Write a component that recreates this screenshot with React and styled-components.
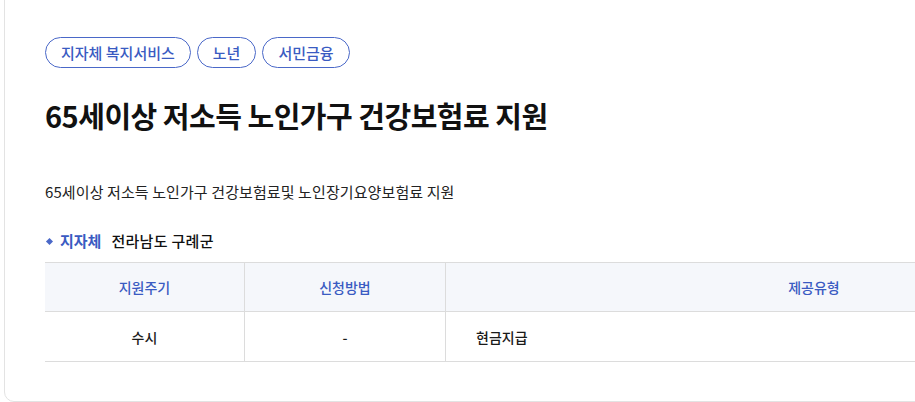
import React from 'react';
import styled, { createGlobalStyle } from 'styled-components';

const GlobalStyle = createGlobalStyle`
	html, body {
		margin: 0;
		padding: 0;
		background: #fff;
		overflow: hidden;
	}
	body {
		font-family: 'Noto Sans CJK KR', 'Noto Sans', sans-serif;
		color: #111;
	}
`;

const Page = styled.div`
	width: 915px;
	height: 402px;
	padding-left: 4px;
	box-sizing: border-box;
	overflow: hidden;
`;

const Card = styled.section`
	width: 1240px;
	margin-top: -12px;
	padding: 48px 0 39px 40px;
	border: 1px solid #e3e3e3;
	border-radius: 10px;
	box-sizing: border-box;
	background: #fff;
`;

const Tags = styled.ul`
	display: flex;
	gap: 6px;
	margin: 0;
	padding: 0;
	list-style: none;
`;

const Tag = styled.li`
	display: flex;
	align-items: center;
	height: 31px;
	padding: 0 15px;
	border: 1px solid #4a68c8;
	border-radius: 16px;
	box-sizing: border-box;
	font-size: 15px;
	font-weight: 500;
	color: #3a5bc2;
`;

const Title = styled.h2`
	margin: 29px 0 0;
	font-size: 29px;
	line-height: 36px;
	font-weight: 700;
	letter-spacing: -0.5px;
	color: #111;
`;

const Desc = styled.p`
	margin: 48px 0 0;
	font-size: 15px;
	line-height: 22px;
	letter-spacing: 0.1px;
	color: #222;
`;

const Info = styled.div`
	display: flex;
	align-items: center;
	gap: 10px;
	margin-top: 27px;
	font-size: 15px;
	line-height: 22px;
	letter-spacing: 0.3px;
`;

const InfoLabel = styled.span`
	display: flex;
	align-items: center;
	gap: 8px;
	font-weight: 700;
	letter-spacing: 0;
	color: #3a5bc2;
	&::before {
		content: '';
		width: 5px;
		height: 5px;
		margin-left: 2px;
		background: #4a68c8;
		transform: rotate(45deg);
	}
`;

const InfoValue = styled.span`
	font-weight: 500;
	color: #111;
`;

const Table = styled.table`
	margin-top: 10px;
	border-collapse: collapse;
	table-layout: fixed;
	width: 1135px;
	border-top: 1px solid #dcdcdc;
`;

const Th = styled.th`
	width: ${props => props.w}px;
	height: 48px;
	padding: 0;
	background: #f5f7fb;
	border-bottom: 1px solid #dcdcdc;
	border-left: ${props => (props.first ? 'none' : '1px solid #dcdcdc')};
	font-size: 14px;
	font-weight: 500;
	color: #3a5bc2;
	text-align: center;
`;

const Td = styled.td`
	height: 49px;
	padding: ${props => (props.left ? '0 0 0 30px' : '0')};
	border-bottom: 1px solid #dcdcdc;
	border-left: ${props => (props.first ? 'none' : '1px solid #dcdcdc')};
	font-size: 14px;
	font-weight: 500;
	color: #1a1a1a;
	text-align: ${props => (props.left ? 'left' : 'center')};
`;

const tags = ['지자체 복지서비스', '노년', '서민금융'];

export default function App() {
	return (
		<>
			<GlobalStyle />
			<Page>
				<Card>
					<Tags>
						{tags.map(t => (
							<Tag key={t}>{t}</Tag>
						))}
					</Tags>
					<Title>65세이상 저소득 노인가구 건강보험료 지원</Title>
					<Desc>65세이상 저소득 노인가구 건강보험료및 노인장기요양보험료 지원</Desc>
					<Info>
						<InfoLabel>지자체</InfoLabel>
						<InfoValue>전라남도 구례군</InfoValue>
					</Info>
					<Table>
						<thead>
							<tr>
								<Th w={199} first>지원주기</Th>
								<Th w={200}>신청방법</Th>
								<Th w={736}>제공유형</Th>
							</tr>
						</thead>
						<tbody>
							<tr>
								<Td first>수시</Td>
								<Td>-</Td>
								<Td left>현금지급</Td>
							</tr>
						</tbody>
					</Table>
				</Card>
			</Page>
		</>
	);
}
